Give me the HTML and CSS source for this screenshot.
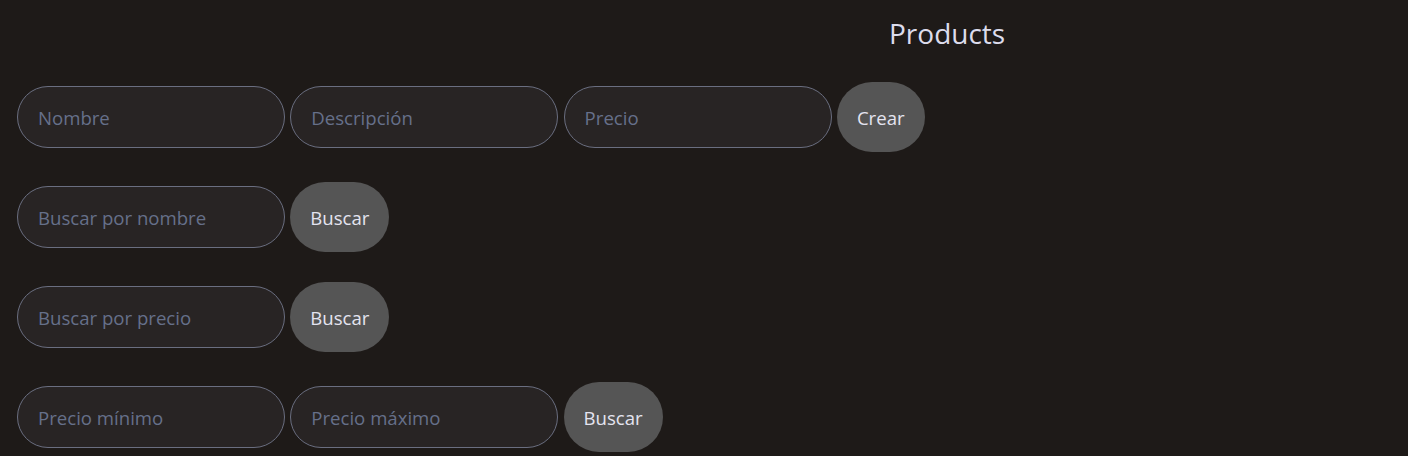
FILE: index.html
```html
<!DOCTYPE html>
<html lang="es">
<head>
<meta charset="utf-8">
<title>Products</title>
<link rel="stylesheet" href="styles.css">
</head>
<body>
<main class="page">
  <h1 class="title">Products</h1>
  <div class="rows">
    <form class="row">
      <input class="field" type="text" placeholder="Nombre">
      <input class="field" type="text" placeholder="Descripción">
      <input class="field" type="text" placeholder="Precio">
      <button class="btn" type="button">Crear</button>
    </form>
    <form class="row">
      <input class="field" type="text" placeholder="Buscar por nombre">
      <button class="btn" type="button">Buscar</button>
    </form>
    <form class="row">
      <input class="field" type="text" placeholder="Buscar por precio">
      <button class="btn" type="button">Buscar</button>
    </form>
    <form class="row">
      <input class="field" type="text" placeholder="Precio mínimo">
      <input class="field" type="text" placeholder="Precio máximo">
      <button class="btn" type="button">Buscar</button>
    </form>
  </div>
</main>
</body>
</html>
```
FILE: styles.css
```css
html, body {
  margin: 0;
  padding: 0;
  background: #1e1a18;
}
body {
  font-family: "Open Sans", "Noto Sans", sans-serif;
  color: #e2e2ee;
}
.page {
  padding: 16px 17px 0 17px;
}
.title {
  margin: 0;
  padding-left: 872px;
  font-size: 28px;
  font-weight: 400;
  line-height: 34px;
  color: #dcdcec;
}
.rows {
  display: flex;
  flex-direction: column;
  gap: 30px;
  margin-top: 32px;
}
.row {
  display: flex;
  align-items: center;
  gap: 5.3px;
  height: 70px;
  margin: 0;
}
.field {
  box-sizing: border-box;
  width: 268px;
  height: 62px;
  padding: 0 0 0 20px;
  border: 1px solid #6a6e80;
  border-radius: 31px;
  background: #282424;
  font-family: inherit;
  font-size: 18.6px;
  color: #dcdcec;
  outline: none;
}
.field::placeholder {
  color: #66708a;
}
.btn {
  box-sizing: border-box;
  height: 70px;
  padding: 0 20px;
  border: none;
  border-radius: 35px;
  background: #555555;
  font-family: inherit;
  font-size: 18.6px;
  color: #e4e4f0;
  cursor: pointer;
}
```
